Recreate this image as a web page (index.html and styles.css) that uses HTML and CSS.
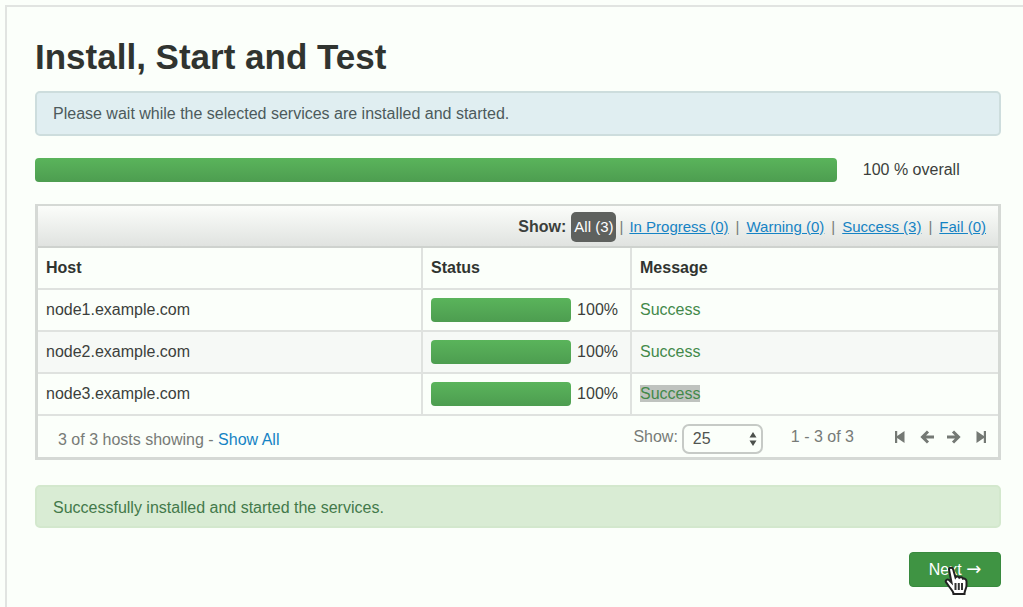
FILE: index.html
```html
<!DOCTYPE html>
<html lang="en">
<head>
<meta charset="utf-8">
<title>Install, Start and Test</title>
<link rel="stylesheet" href="styles.css">
</head>
<body>
<main class="wizard">
  <h1 class="title">Install, Start and Test</h1>
  <p class="alert alert-info">Please wait while the selected services are installed and started.</p>
  <div class="overall">
    <div class="bar overall-bar" role="progressbar" aria-label="Overall progress" aria-valuenow="100"></div>
    <span>100 % overall</span>
  </div>
  <section class="hosts">
    <nav class="filters" aria-label="Host filter">
      <strong>Show:</strong>
      <a class="active" href="#all">All (3)</a><i class="sep sep-first">|</i>
      <a href="#progress">In Progress (0)</a><i class="sep">|</i>
      <a href="#warning">Warning (0)</a><i class="sep">|</i>
      <a href="#success">Success (3)</a><i class="sep">|</i>
      <a href="#fail">Fail (0)</a>
    </nav>
    <table class="table">
      <colgroup><col class="col-host"><col class="col-status"><col></colgroup>
      <thead>
        <tr><th>Host</th><th>Status</th><th>Message</th></tr>
      </thead>
      <tbody>
        <tr>
          <td>node1.example.com</td>
          <td><div class="status"><div class="bar status-bar"></div><span>100%</span></div></td>
          <td><span class="success">Success</span></td>
        </tr>
        <tr>
          <td>node2.example.com</td>
          <td><div class="status"><div class="bar status-bar"></div><span>100%</span></div></td>
          <td><span class="success">Success</span></td>
        </tr>
        <tr>
          <td>node3.example.com</td>
          <td><div class="status"><div class="bar status-bar"></div><span>100%</span></div></td>
          <td><span class="success selected">Success</span></td>
        </tr>
      </tbody>
    </table>
    <footer class="footer">
      <div class="showing">3 of 3 hosts showing - <a href="#showall">Show All</a></div>
      <label class="page-label" for="page-size">Show:</label>
      <div class="select-box">
        <select id="page-size"><option>10</option><option selected>25</option><option>50</option></select>
        <svg class="select-arrows" width="8" height="14" viewBox="0 0 8 14" aria-hidden="true"><path d="M4 0 7.500 5.500H.5zM4 14 .5 8.500h7z"/></svg>
      </div>
      <span class="range">1 - 3 of 3</span>
      <div class="pager">
        <button type="button" aria-label="First page"><svg width="14" height="14" viewBox="0 0 14 14"><path d="M2 1h2.200v5L11.500 1v12L4.200 8v5H2z"/></svg></button>
        <button type="button" aria-label="Previous page"><svg width="14" height="14" viewBox="0 0 14 14"><path class="line" d="M8 1.500 2.500 7 8 12.500M3 7h11"/></svg></button>
        <button type="button" aria-label="Next page"><svg width="14" height="14" viewBox="0 0 14 14"><path class="line" d="M6 1.500 11.500 7 6 12.500M11 7H0"/></svg></button>
        <button type="button" aria-label="Last page"><svg width="14" height="14" viewBox="0 0 14 14"><path d="M12 1H9.800v5L2.500 1v12L9.800 8v5H12z"/></svg></button>
      </div>
    </footer>
  </section>
  <p class="alert alert-success">Successfully installed and started the services.</p>
  <div class="actions">
    <button class="next" type="button">Next <span class="arrow">→</span></button>
    <svg class="cursor" width="24" height="30" viewBox="0 0 24 30" aria-hidden="true">
      <path class="hand" d="M5 3.500C5 1.500 8.500 1 9.200 3.500l2.300 8c1-1.300 3-1.200 3.800.2 1.300-1 3.200-.5 3.700 1 2-.5 3.500.8 3.500 2.800v4c0 3-2 4.500-2 8.500H9.500c0-2.500-2-4-3.700-6.500L2 16.200c-1-1.700 1.200-3.500 3-2.200l2.500 2.500z"/>
      <path class="lines" d="M11.500 17v7M14.800 17v7M18 17v7"/>
    </svg>
  </div>
</main>
</body>
</html>
```
FILE: styles.css
```css
* { box-sizing: border-box; }
body {
  margin: 0;
  padding: 5px 0 0 5px;
  background: #fbfffa;
  color: #3c3f3c;
  font: 16px/20px "Liberation Sans", Arial, sans-serif;
}
a { color: #1583c4; text-decoration: none; }
.wizard {
  min-height: calc(100vh - 5px);
  padding: 30px 22px 20px 28px;
  border-top: 2px solid #e1e4e1;
  border-left: 2px solid #e1e4e1;
}
.title {
  margin: 0 0 14px;
  color: #303430;
  font-size: 35px;
  line-height: 40px;
}
.alert {
  margin: 0;
  padding: 11px 16px 10px;
  border: 2px solid;
  border-radius: 5px;
}
.alert-info { border-color: #cddddd; background: #e0eef1; color: #4c5a5c; }
.alert-success {
  padding-bottom: 8px;
  border-color: #d3e8cd;
  background: #d9ecd4;
  color: #43794a;
}
.bar {
  border-radius: 4px;
  background: linear-gradient(#5ab45b, #4d9d50);
}
.overall {
  display: flex;
  align-items: center;
  gap: 26px;
  margin: 22px 0;
}
.overall-bar { flex: 0 0 83%; height: 24px; }
.hosts {
  margin-bottom: 25px;
  border: 3px solid #d5d9d5;
  border-top-width: 2px;
}
.filters {
  display: flex;
  align-items: center;
  justify-content: flex-end;
  height: 42px;
  padding: 2px 12px 0 0;
  border-bottom: 2px solid #ced2ce;
  background: linear-gradient(#fbfdfa, #e0e3e0);
  font-size: 15px;
}
.filters strong { font-size: 16px; }
.filters a { text-decoration: underline; }
.filters .active {
  margin-left: 5px;
  padding: 5px 3px;
  border-radius: 5px;
  background: #5e615e;
  color: #fff;
  text-decoration: none;
}
.sep { padding: 0 7px; color: #777b77; font-style: normal; }
.sep-first { padding: 0 6px 0 3px; }
.table {
  width: 100%;
  border-collapse: collapse;
  table-layout: fixed;
}
.col-host { width: 40%; }
.col-status { width: 209px; }
.table th, .table td {
  padding: 0 8px;
  border-bottom: 2px solid #dfe2df;
  text-align: left;
}
.table th { height: 41px; color: #303430; }
.table td { height: 42px; }
.table th + th, .table td + td { border-left: 2px solid #dfe2df; }
.table tbody tr:nth-child(even) { background: #f6f9f6; }
.status {
  display: flex;
  align-items: center;
  gap: 6px;
  padding-right: 4px;
}
.status-bar { flex: 1; height: 24px; }
.success { color: #43894a; }
.selected { background: #bfc3bf; }
.footer {
  display: flex;
  align-items: center;
  height: 41px;
  padding: 0 10px 0 20px;
  color: #777b77;
}
.showing { flex: 1; padding-top: 6px; }
.select-box { position: relative; margin: 4px 28px 0 4px; }
.select-box select {
  appearance: none;
  display: block;
  width: 81px;
  height: 30px;
  padding: 0 9px;
  border: 2px solid #c6cac6;
  border-radius: 7px;
  background: #fbfffa;
  color: #505450;
  font: inherit;
}
.select-arrows {
  position: absolute;
  top: 8px;
  right: 6px;
  fill: #4c504c;
  pointer-events: none;
}
.pager { display: flex; gap: 13px; margin-left: 39px; }
.pager button {
  display: flex;
  padding: 0;
  border: 0;
  background: none;
}
.pager svg { fill: #747974; }
.pager .line { fill: none; stroke: #747974; stroke-width: 3; }
.actions {
  position: relative;
  display: flex;
  justify-content: flex-end;
  margin-top: 24px;
}
.next {
  width: 92px;
  height: 35px;
  padding: 0;
  border: 1px solid #388a3e;
  border-radius: 4px;
  background: #3f9443;
  color: #fff;
  font: inherit;
}
.arrow { font-family: "DejaVu Sans", sans-serif; font-size: 18px; }
.cursor { position: absolute; top: 14px; right: 33px; }
.hand { fill: #fff; stroke: #222; stroke-width: 2; }
.lines { fill: none; stroke: #333; stroke-width: 2; }
```
